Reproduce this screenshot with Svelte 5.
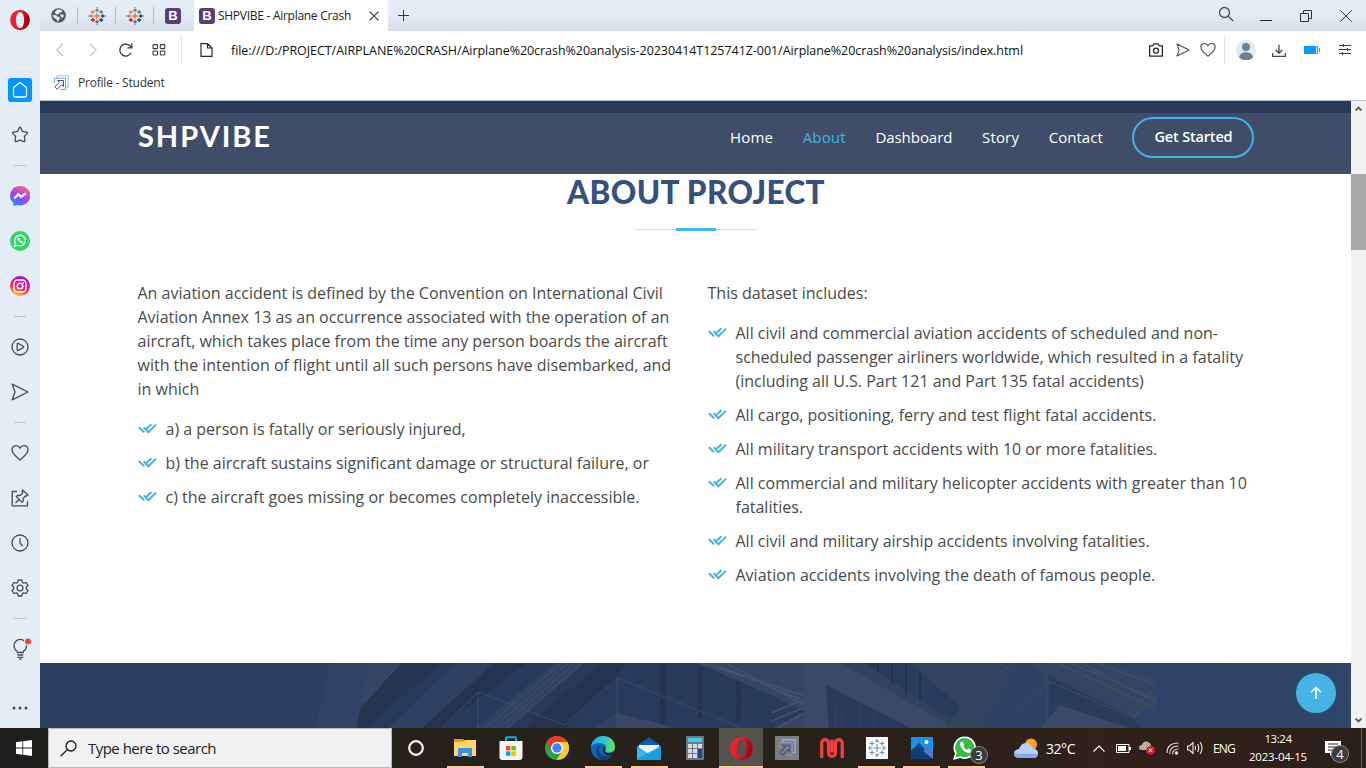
<script>
  // Spreads the letters of a label so that it fills the given width.
  function fit(node, width) {
    const natural = node.getBoundingClientRect().width;
    node.style.letterSpacing = (width - natural) / node.textContent.length + 'px';
  }

  const navLinks = [
    { label: 'Home', w: 43 },
    { label: 'About', w: 43, active: true },
    { label: 'Dashboard', w: 77 },
    { label: 'Story', w: 37 },
    { label: 'Contact', w: 54 }
  ];
  const intro = [
    'An aviation accident is defined by the Convention on International Civil',
    'Aviation Annex 13 as an occurrence associated with the operation of an',
    'aircraft, which takes place from the time any person boards the aircraft',
    'with the intention of flight until all such persons have disembarked, and',
    'in which'
  ];
  const leftList = [
    ['a) a person is fatally or seriously injured,'],
    ['b) the aircraft sustains significant damage or structural failure, or'],
    ['c) the aircraft goes missing or becomes completely inaccessible.']
  ];
  const rightList = [
    [
      'All civil and commercial aviation accidents of scheduled and non-',
      'scheduled passenger airliners worldwide, which resulted in a fatality',
      '(including all U.S. Part 121 and Part 135 fatal accidents)'
    ],
    ['All cargo, positioning, ferry and test flight fatal accidents.'],
    ['All military transport accidents with 10 or more fatalities.'],
    ['All commercial and military helicopter accidents with greater than 10', 'fatalities.'],
    ['All civil and military airship accidents involving fatalities.'],
    ['Aviation accidents involving the death of famous people.']
  ];
  const stars = [
    [10, 10, 3.4, '#e8762c'], [10, 3.6, 2, '#5b879b'], [10, 16.4, 2, '#5b6591'],
    [3.6, 10, 2, '#7199a6'], [16.4, 10, 2, '#1f457e'], [5.4, 5.6, 2.3, '#eb912c'],
    [14.6, 5.6, 2.3, '#59879b'], [5.4, 14.4, 2.3, '#c72035'], [14.6, 14.4, 2.3, '#1f457e']
  ];
</script>

{#snippet opera(size, id)}
  <svg width={size} height={size} viewBox="0 0 20 20">
    <defs>
      <linearGradient id={id} x1="0" x2="1" y1="0" y2=".3"><stop offset="0" stop-color="#ff2438" /><stop offset=".55" stop-color="#ee1428" /><stop offset="1" stop-color="#a3000f" /></linearGradient>
    </defs>
    <path fill="url(#{id})" fill-rule="evenodd" d="M10 0C4.500 0 .2 4.400.2 10S4.500 20 10 20s9.800-4.400 9.800-10S15.500 0 10 0zm0 1.900c2.700 0 4.100 3.700 4.100 8.100s-1.400 8.100-4.100 8.100S5.900 14.400 5.900 10 7.300 1.900 10 1.900z" />
  </svg>
{/snippet}

{#snippet tableau()}
  <svg width="18" height="18" viewBox="0 0 20 20">
    {#each stars as [x, y, r, c]}
      <path d="M{x - r} {y}h{2 * r}M{x} {y - r}v{2 * r}" stroke={c} stroke-width="1.500" />
    {/each}
    <path d="M10 0v1.500M10 18.500V20M0 10h1.500M18.500 10H20" stroke="#8292b8" stroke-width="1.500" />
  </svg>
{/snippet}

{#snippet bootstrap()}
  <span class="bs">B</span>
{/snippet}

{#snippet link(size)}
  <svg width={size} height={size} viewBox="0 0 16 16" fill="none">
    <path d="M4 3V.8h11.200v11.400H13" stroke="#7ecbe4" />
    <path d="M1.500 8V3.200h11v11.300h-5" stroke="#8f96c8" />
    <path d="M4.500 5.500h6v6L8.700 9.700l-4.400 4.600-2.600-2.500 4.600-4.500z" stroke="#3d5590" />
  </svg>
{/snippet}

{#snippet heart(size)}
  <svg width={size} height={size} viewBox="0 0 18 18" class="ln"><path d="M9 16C5 12.600 1 9.500 1 5.800 1 3.300 2.800 1.700 5 1.700c1.700 0 3.200.9 4 2.500.8-1.600 2.300-2.500 4-2.500 2.200 0 4 1.600 4 4.100C17 9.500 13 12.600 9 16z" /></svg>
{/snippet}

{#snippet plane(size)}
  <svg width={size} height={size} viewBox="0 0 18 18" class="ln"><path d="M1.200 1.200 17 9 1.200 16.800 4 9z" /></svg>
{/snippet}

{#snippet checks(items)}
  <ul>
    {#each items as lines}
      <li>
        <svg class="check" width="20" height="24" viewBox="0 0 20 24"><path d="M.9 10.200 6.200 15.300M5.700 10.200l4.700 5L18 7.600M8.600 11.800 13.400 7.200" fill="none" stroke="#47b2e4" stroke-width="2" /></svg>
        <div>{#each lines as line}<p>{line}</p>{/each}</div>
      </li>
    {/each}
  </ul>
{/snippet}

<div class="screen">
  <div class="window">
    <aside>
      <div class="logo">{@render opera(20, 'og1')}</div>
      <div class="cell"><span class="home"><svg width="24" height="24" viewBox="0 0 24 24" fill="none" stroke="#fff" stroke-width="1.300"><path d="M5.500 10.200Q5.500 9.600 6 9.200L11.300 4.900q.7-.5 1.400 0L18 9.200q.5.400.5 1v7q0 1.800-1.800 1.800H7.300q-1.800 0-1.800-1.800z" /></svg></span></div>
      <div class="cell"><svg width="18" height="18" viewBox="0 0 18 18" class="ln"><path d="M9 1.200q.5 0 .8.700l1.600 3.400 4.300.8q1.200.3.400 1.300l-2.700 3 .5 4.500q0 1-1 .7L9 14.200l-3.900 1.400q-1 .3-1-.7l.5-4.500-2.700-3q-.8-1 .4-1.300l4.300-.8 1.600-3.400q.3-.7.8-.7z" /></svg></div>
      <div class="sep"><i></i></div>
      <div class="cell"><svg width="20" height="20" viewBox="0 0 20 20"><defs><linearGradient id="ms" x1=".2" x2=".7" y1="1" y2="0"><stop offset="0" stop-color="#1b8cff" /><stop offset=".5" stop-color="#a044f5" /><stop offset="1" stop-color="#ff6575" /></linearGradient></defs><path fill="url(#ms)" d="M10 0a10 9.700 0 1 1-2.500 19L3.500 20v-3A9.700 9.700 0 0 1 10 0z" /><path d="m4.300 12.500 3.900-4.200 3 2.600 4.500-3.400" fill="none" stroke="#fff" stroke-width="2.200" /></svg></div>
      <div class="cell"><svg width="20" height="20" viewBox="0 0 20 20"><circle cx="10" cy="10" r="10" fill="#32d467" /><path d="m4.700 15.200.8-2.900a5.300 5.300 0 1 1 2 1.900z" fill="none" stroke="#fff" stroke-width="1.300" /><path d="M7.700 7.200c-.4 2 2.400 5 4.700 4.800l.7-1.300-1.600-.9-.8.700-1.400-1.500.5-.8-.7-1.600z" fill="#fff" /></svg></div>
      <div class="cell"><svg width="20" height="20" viewBox="0 0 20 20"><defs><linearGradient id="ig" x1=".3" x2=".7" y1="1" y2="0"><stop offset="0" stop-color="#ffd225" /><stop offset=".35" stop-color="#ff304f" /><stop offset=".7" stop-color="#e601b4" /><stop offset="1" stop-color="#6420f5" /></linearGradient></defs><circle cx="10" cy="10" r="10" fill="url(#ig)" /><g fill="none" stroke="#fff" stroke-width="1.500"><rect x="4" y="4" width="12" height="12" rx="3.500" /><circle cx="10" cy="10" r="2.800" /></g><circle cx="13.300" cy="6.700" r=".9" fill="#fff" /></svg></div>
      <div class="sep"><i></i></div>
      <div class="cell"><svg width="18" height="18" viewBox="0 0 18 18" class="ln"><circle cx="9" cy="9" r="8" /><path d="M6.200 6q0-1 1-.6l5 2.800q1 .7 0 1.400l-5 2.800q-1 .4-1-.6z" /></svg></div>
      <div class="cell">{@render plane(18)}</div>
      <div class="sep"><i></i></div>
      <div class="cell">{@render heart(18)}</div>
      <div class="cell"><svg width="18" height="18" viewBox="0 0 18 18" class="ln"><path d="M6 2.500H1.200v14.300h15.300v-4.500" /><path d="m11.500 1 5.500 5-1.500 1-1-.2-2.500 2.800.3 2.400-1.300 1.300-5.700-5.700 1.400-1.300 2.400.2 2.600-2.500-.5-1.300zM8 10.500 4.500 14" /></svg></div>
      <div class="cell"><svg width="18" height="18" viewBox="0 0 18 18" class="ln"><circle cx="9" cy="9" r="8" /><path d="M9 4.300V9l2.800 3" /></svg></div>
      <div class="cell"><svg width="18" height="18" viewBox="0 0 18 18" class="ln"><path d="M7.200 1h3.600l.6 2.400 1.400.8 2.400-.7L17 6.600l-1.700 1.700v1.400l1.700 1.700-1.800 3.100-2.400-.7-1.400.8-.6 2.400H7.200l-.6-2.400-1.400-.8-2.400.7L1 11.400l1.700-1.700V8.300L1 6.600l1.800-3.100 2.400.7 1.400-.8z" /><circle cx="9" cy="9" r="2.900" /></svg></div>
      <div class="sep"><i></i></div>
      <div class="cell bulb"><svg width="22" height="22" viewBox="0 0 22 22" class="ln"><path d="M7.300 14.500v-1.300Q4 11.300 4 7.700a6.300 6.300 0 0 1 12.600 0q0 3.600-3.300 5.500v1.300zM7.300 17h6M7.300 19.300h6M9 21.200h2.600" /><circle cx="18" cy="3.500" r="4" fill="#e4edf5" stroke="none" /><circle cx="18" cy="3.500" r="3" fill="#ff3b30" stroke="none" /></svg></div>
      <div class="dots"><svg width="16" height="4" viewBox="0 0 16 4" fill="#3f4852"><circle cx="2" cy="2" r="1.500" /><circle cx="8" cy="2" r="1.500" /><circle cx="14" cy="2" r="1.500" /></svg></div>
    </aside>

    <div class="main">
      <div class="tabs">
        <div class="mini first"><svg width="15" height="15" viewBox="0 0 15 15"><circle cx="7.500" cy="7.500" r="7.300" fill="#525960" /><path d="M6.500 1.600 11 2l-.3 2.200-2 .4-1.300 1.700H5L3.600 4.200zM1 7.200h4.300l1 1.600h2.200l.4 2-2.400 3-1-2.600-2.500-1.400zM9 6.500h3l1 1.400-1.800 2.100-1.500-1.700z" fill="#e8edf1" /></svg></div>
        <div class="mini">{@render tableau()}</div>
        <div class="mini">{@render tableau()}</div>
        <div class="mini last">{@render bootstrap()}</div>
        <div class="tab">
          {@render bootstrap()}
          <span class="tabname"><span use:fit={133}>SHPVIBE - Airplane Crash</span></span>
          <svg width="10" height="10" viewBox="0 0 10 10" class="ln thin"><path d="m.5.500 9 9m0-9-9 9" /></svg>
        </div>
        <svg class="plus" width="11" height="11" viewBox="0 0 11 11" fill="none" stroke="#333a40"><path d="M5.500 0v11M0 5.500h11" /></svg>
        <div class="wins">
          <svg width="16" height="16" viewBox="0 0 16 16" class="ln"><circle cx="6.500" cy="6.500" r="5" /><path d="m10.200 10.200 5 4.800" /></svg>
          <svg width="12" height="12" viewBox="0 0 12 12" fill="none" stroke="#222"><path d="M0 11.500h12" /></svg>
          <svg width="12" height="12" viewBox="0 0 12 12" fill="none" stroke="#333"><path d="M.5 3.500h8v8h-8zM3.500 3.500v-3h8v8h-3" /></svg>
          <svg width="12" height="12" viewBox="0 0 12 12" fill="none" stroke="#333"><path d="m.3.300 11.400 11.400m0-11.400L.3 11.700" /></svg>
        </div>
      </div>

      <div class="address">
        <div class="navs">
          <svg width="8" height="14" viewBox="0 0 8 14" fill="none" stroke="#c3c6c9" stroke-width="1.400"><path d="M7 .8.9 7 7 13.200" /></svg>
          <svg width="8" height="14" viewBox="0 0 8 14" fill="none" stroke="#c3c6c9" stroke-width="1.400"><path d="M1 .8 7.100 7 1 13.200" /></svg>
          <svg width="14" height="14" viewBox="0 0 14 14" fill="none" stroke="#333d45" stroke-width="1.300"><path d="M12.200 9.700A6 6 0 1 1 11.700 3.500l.8 1.300M12.800.5v4.300H8.500" /></svg>
          <svg width="14" height="12" viewBox="0 0 14 12" fill="none" stroke="#333d45" stroke-width="1.100"><rect x="1" y=".6" width="4.500" height="4" rx=".8" /><rect x="8.300" y=".6" width="4.500" height="4" rx=".8" /><rect x="1" y="7" width="4.500" height="4" rx=".8" /><rect x="8.300" y="7" width="4.500" height="4" rx=".8" /></svg>
        </div>
        <svg class="page" width="13" height="14" viewBox="0 0 13 14" fill="none" stroke="#222a30" stroke-width="1.200"><path d="M1 .7h6.500L12 5v8.300H1zM7.500.7V5H12" /></svg>
        <span class="url"><span use:fit={792}>file:///D:/PROJECT/AIRPLANE%20CRASH/Airplane%20crash%20analysis-20230414T125741Z-001/Airplane%20crash%20analysis/index.html</span></span>
        <div class="tools">
          <svg width="14" height="14" viewBox="0 0 14 14" class="ln dark"><path d="M.6 2.800h3.200L4.800.8h4.400l1 2h3.200v10.400H.6z" /><circle cx="7" cy="7.700" r="2.500" /></svg>
          {@render plane(14)}
          {@render heart(16)}
          <i></i>
          <svg class="av" width="20" height="20" viewBox="0 0 20 20"><circle cx="10" cy="10" r="10" fill="#e1eaf2" /><circle cx="10" cy="7" r="4" fill="#6b7f95" /><path d="M3 17.500q1-5.300 7-5.300t7 5.300A10 10 0 0 1 3 17.500z" fill="#6b7f95" /></svg>
          <svg class="dl ln" width="14" height="13" viewBox="0 0 14 13"><path d="M7 .5v8.700M3.700 6 7 9.300 10.300 6M.7 9v3.400h12.600V9" /></svg>
          <svg width="16" height="8" viewBox="0 0 16 8"><path fill="#0a96ff" d="M1 0h12q1 0 1 1v6q0 1-1 1H1Q0 8 0 7V1q0-1 1-1z" /><path d="M12.500 1v6" stroke="#fff" /><path d="M15.500 2v4" stroke="#0a96ff" /></svg>
          <svg width="12" height="12" viewBox="0 0 12 12" fill="none" stroke="#333d45"><path d="M0 1.500h12M0 5.500h12M0 9.500h12M4.500 0v3M8.500 4v3M3.500 8v3" /></svg>
        </div>
      </div>

      <div class="bookmarks">{@render link(16)}<span><span use:fit={86.5}>Profile - Student</span></span></div>

      <div class="viewport">
        <div class="site">
          <div class="hero"></div>
          <header>
            <h1><span use:fit={134}>SHPVIBE</span></h1>
            <nav>
              {#each navLinks as l}
                <a class:active={l.active} style="width:{l.w}px"><span use:fit={l.w}>{l.label}</span></a>
              {/each}
              <a class="cta"><span use:fit={78}>Get Started</span></a>
            </nav>
          </header>
          <section>
            <h2><span use:fit={258}>ABOUT PROJECT</span></h2>
            <div class="rule"><b></b></div>
            <div class="cols">
              <div class="left">
                <div class="para">{#each intro as line}<p>{line}</p>{/each}</div>
                {@render checks(leftList)}
              </div>
              <div>
                <div class="para"><p>This dataset includes:</p></div>
                {@render checks(rightList)}
              </div>
            </div>
          </section>
          <div class="banner">
            <svg width="1311" height="65" viewBox="0 0 1311 65">
              <defs>
                <linearGradient id="bg"><stop offset="0" stop-color="#2b3f63" /><stop offset=".5" stop-color="#2a3f62" /><stop offset="1" stop-color="#2f4669" /></linearGradient>
                <pattern id="slats" width="40" height="6" patternUnits="userSpaceOnUse" patternTransform="rotate(22)"><path d="M0 2h40" stroke="#233552" stroke-width="2.200" /></pattern>
              </defs>
              <rect width="1311" height="65" fill="url(#bg)" />
              <path d="M290 0h39l-8 43-5 22h-41z" fill="#2e4365" />
              <path d="M329 0h33l-41 43z" fill="#324566" />
              <path d="M362 0h52l-75 65h-23l5-22z" fill="#25354f" />
              <path d="M402 0h42l-70 65h-48z" fill="#263a5b" />
              <path d="M430 0h66l-76 65h-45z" fill="#24334f" />
              <path d="M416 0h38l-72 65h-34z" fill="#2e4163" />
              <path d="M486 0h33l-74 65h-45z" fill="#263a5b" />
              <path d="M515 0h30l-75 65h-35z" fill="#2f4262" />
              <path d="M545 0h36l-75 65h-36z" fill="#27385a" />
              <path d="M561 0h100l-83 65h-92z" fill="#24334f" />
              <path d="M577 15v50h-52z" fill="#273b5d" />
              <path d="M586 0h72l162 65H577V15z" fill="#283b5c" />
              <path d="M592 0h70l70 32v33l-100-18-40-28z" fill="url(#slats)" opacity=".4" />
              <path d="M620 0h5v65h-5zM658 5h4v50h-4zM696 18h5v40h-5z" fill="#24334f" />
              <path d="M577 50 636 65h-59z" fill="#384866" />
              <path d="M577 50 577 65h-22z" fill="#304263" />
              <path d="M438 29 525 62 577 15 702 65M438 29l-36 36M438 29v36M577 15v50" fill="none" stroke="#41526f" stroke-width=".8" />
              <path d="M345 0 322 26M350 0l-28 31M355 0l-33 37M360 0l-38 42M521 0l-75 65M528 0l-75 65M535 0l-75 65M542 0l-75 65" stroke="#3c4c69" stroke-width="1.100" />
              <path d="M656 0h110v65h-34l32-16-32-17z" fill="#364765" />
              <path d="M662 0 765 33M672 0l93 38M686 0l79 42M732 58l33-14M732 50l27-12M738 65l26-15" stroke="#43526e" stroke-width="1.500" fill="none" />
              <path d="M764 0h45l130 65h-69L786 22l5 43h-27z" fill="#3a4967" />
              <path d="M786 22 870 65h-81z" fill="#29395a" />
              <path d="M795 42v23M802 45v20M820 40v25M834 50v15" stroke="#304769" />
              <path d="M800 0h75l80 65h-40z" fill="#31425f" />
              <path d="M824 0h45l55 45v20z" fill="#283c5e" />
              <path d="M838 0v10M852 0v20M866 0v32M880 9v30" stroke="#22324f" stroke-width="2" />
              <path d="M875 0h105l-22 40-18 25h-35l15-20z" fill="#33445f" opacity=".8" />
              <path d="M990 0h75l48 14 5 26-24 14L1008 18z" fill="#344562" />
              <path d="M1010 0h32l75 40M1018 0l97 45M1030 0l86 36M1056 0l59 22" stroke="#42516d" stroke-width="1.100" fill="none" />
              <path d="M1008 12v53h95l-12-12z" fill="#293c5c" />
              <path d="M1010 16 1090 50l10 15h-60z" fill="url(#slats)" opacity=".4" />
              <path d="M1008 18 965 65M1008 18l85 37M1008 18v47" fill="none" stroke="#41526f" stroke-width=".8" />
              <path d="m1020 42 70 23h-90z" fill="#394966" />
              <path d="M956 15l15-15M946 10l12-10M1094 54l24-22M1088 50l24-22" stroke="#42516d" stroke-width="1" />
            </svg>
          </div>
          <div class="totop"><svg width="12" height="14" viewBox="0 0 12 14" fill="none" stroke="#fff" stroke-width="1.600"><path d="M6 13V1.500M1.200 6.200 6 1.400l4.800 4.800" /></svg></div>
        </div>
        <div class="scroll">
          <svg width="7" height="5" viewBox="0 0 7 5"><path d="M.5 4.500 3.500 1.500l3 3" fill="none" stroke="#555" stroke-width="1.800" /></svg>
          <div class="thumb"></div>
          <svg width="7" height="5" viewBox="0 0 7 5"><path d="M.5.500 3.500 3.500l3-3" fill="none" stroke="#555" stroke-width="1.800" /></svg>
        </div>
      </div>
    </div>
  </div>

  <footer>
    <div class="start"><svg width="16" height="16" viewBox="0 0 16 16" fill="#fff"><path d="M0 2.200 6.400 1.300v6.300H0zM7.200 1.200 16 0v7.600H7.200zM0 8.400h6.400v6.300L0 13.800zM7.200 8.400H16V16l-8.800-1.200z" /></svg></div>
    <div class="search"><svg width="17" height="17" viewBox="0 0 17 17" fill="none" stroke="#1a1a1a" stroke-width="1.300"><circle cx="11" cy="6" r="5" /><path d="M7.300 9.600.6 16.300" /></svg><span><span use:fit={128}>Type here to search</span></span></div>
    <div class="apps">
      <div class="app cortana"><svg width="16" height="16" viewBox="0 0 16 16" fill="none" stroke="#f4f4f4" stroke-width="2.200"><circle cx="8" cy="8" r="6.800" /></svg></div>
      <div class="app open"><svg width="22" height="20" viewBox="0 0 22 20"><path d="M0 1h9l2 2v4H0z" fill="#e0a010" /><path d="M0 4h9l2-2h11v16H0z" fill="#ffd66b" /><path d="M4 19v-8q0-1 1-1h12q1 0 1 1v8h-4v-4H8v4z" fill="#3c91dc" /></svg></div>
      <div class="app"><svg width="24" height="24" viewBox="0 0 24 24"><path d="M7 6V2q0-.8.800-.8h8.400q.8 0 .8.800v4" fill="none" stroke="#16a9ea" stroke-width="2" /><path d="M.5 5h23v16q0 3-3 3h-17q-3 0-3-3z" fill="#f5f5f5" /><path fill="#f25022" d="M7 10h4.400v4.400H7z" /><path fill="#7fba00" d="M12.400 10h4.400v4.400h-4.400z" /><path fill="#00a4ef" d="M7 15.400h4.400v4.400H7z" /><path fill="#ffb900" d="M12.400 15.400h4.400v4.400h-4.400z" /></svg></div>
      <div class="app"><svg width="24" height="24" viewBox="0 0 24 24"><circle cx="12" cy="12" r="12" fill="#2ca14b" /><path d="M12 12 1.600 6A12 12 0 0 1 22.400 6z" fill="#e33b2e" /><path d="M12 6h10.400A12 12 0 0 1 11.500 24l5.700-9z" fill="#fcc934" /><path d="M1.600 6 7 15l5-9z" fill="#e33b2e" /><circle cx="12" cy="12" r="6" fill="#fff" /><circle cx="12" cy="12" r="4.700" fill="#4285f4" /></svg></div>
      <div class="app open"><svg width="24" height="24" viewBox="0 0 24 24"><defs><linearGradient id="ed"><stop offset="0" stop-color="#21a5e8" /><stop offset=".55" stop-color="#30c5cf" /><stop offset="1" stop-color="#6be54b" /></linearGradient></defs><circle cx="12" cy="12" r="12" fill="#0c66b7" /><path d="M0 11C1 4 6 0 12 0c7 0 12 5 12 10.500 0 4-3 6-6.500 6-3 0-4-1-3-2.500 2-4-1.500-7-5.500-7-4 0-8 2-9 4z" fill="url(#ed)" /><path d="M10 9c-5 6 0 12 7 11 2 0 4-1 5-2-2 4-6 6-10 6C4 23 3 11 10 9z" fill="#123f83" /><path d="M14.500 14c-1 2 1 3.500 4 3.300l5.500-1.500-1.500 3c-7 3-13-3-9.500-8q2 1 1.500 3.200z" fill="#25231d" /></svg></div>
      <div class="app open"><svg width="24" height="23" viewBox="0 0 24 23"><path d="M0 9 12 0l12 9v4H0z" fill="#075eac" /><path d="M2 8h20v10H2z" fill="#f1f4f7" /><path d="m0 9 12 8 12-8v14H0z" fill="#32b6f2" /><path d="m12 15 12-6v14H0z" fill="#1691dc" opacity=".7" /></svg></div>
      <div class="app"><svg width="18" height="24" viewBox="0 0 18 24"><rect width="18" height="24" rx="1" fill="#6d7883" /><path d="M2 2h14v4H2z" fill="#42cdf5" /><path d="M2 8h4v4H2zM7 8h4v4H7zM12 8h4v4h-4zM2 13h4v4H2zM7 13h4v4H7zM2 18h4v4H2zM7 18h4v4H7z" fill="#d9dde2" /><path d="M12 13h4v9h-4z" fill="#164a8a" /></svg></div>
      <div class="app open current">{@render opera(23, 'og2')}</div>
      <div class="app n"><span class="tile">{@render link(18)}</span></div>
      <div class="app n"><svg width="24" height="20" viewBox="0 0 24 20" fill="none" stroke="#f1403f" stroke-width="3.300"><path d="M1.700 20V5.100a3.430 3.430 0 0 1 6.860 0V14.900a3.430 3.430 0 0 0 6.860 0V5.100a3.430 3.430 0 0 1 6.860 0V20M12 1.500v13" /></svg></div>
      <div class="app n open"><svg width="22" height="22" viewBox="0 0 22 22"><path d="M0 0h22v22H0z" fill="#fafafa" /><path d="M11 7v8M7 11h8M11 2v4M9 4h4M11 16v4M9 18h4M2 11h4M4 9v4M16 11h4M18 9v4M6 4v5M3.500 6.500h5M16 4v5M13.500 6.500h5M6 13v5M3.500 15.500h5M16 13v5M13.500 15.500h5" stroke="#6f95b3" stroke-width="1.100" /></svg></div>
      <div class="app n open"><svg width="22" height="22" viewBox="0 0 22 22"><path d="M0 0h22v22H0z" fill="#1b91e9" /><path d="M0 14 8 6l14 15v1H0z" fill="#103e72" /><path d="m12 14 5-4 5 5v7z" fill="#5873d0" /><circle cx="15.500" cy="5" r="2" fill="#fff" /></svg></div>
      <div class="app n open wa"><svg width="30" height="28" viewBox="0 0 30 28"><path d="M0 24 2 17.500A11.300 11.300 0 1 1 7 22z" fill="#fff" /><path d="m2.300 21.600 1.500-4.700a9.500 9.500 0 1 1 3.900 3.300z" fill="#36bb4b" /><path d="M7.200 6.400c-1 5 5 11.300 9.800 10.400l1.400-2.600-3-1.800-1.600 1.500-3.500-3.600 1-1.600-1.500-3z" fill="#fff" /></svg><em>3</em></div>
    </div>
    <div class="tray">
      <svg width="25" height="20" viewBox="0 0 25 20"><circle cx="17" cy="6.500" r="6" fill="#f7a128" /><path d="M5 20q-5-.5-5-4.500t5-4.500Q7 5 12 5t7 5.500q5 .5 5 5T19 20z" fill="#b7cff5" /><path d="M5 20q-5-.5-5-4.500l24 .5q-1 4-5 4z" fill="#85a9e8" /></svg>
      <span class="temp"><span use:fit={29}>32°C</span></span>
      <svg width="12" height="7" viewBox="0 0 12 7" fill="none" stroke="#fff" stroke-width="1.200"><path d="M.5 6.500 6 1l5.500 5.500" /></svg>
      <svg width="15" height="9" viewBox="0 0 15 9"><path d="M.5.500h12.500v8H.5z" fill="none" stroke="#fff" /><path d="M2 2h8v5H2zM13 3h2v3h-2z" fill="#fff" /></svg>
      <svg width="16" height="14" viewBox="0 0 16 14"><path d="M3 9Q0 9 0 6.500T3 4q1-4 5-3.500Q11 1 12 4l-3 5z" fill="#b3b0ad" /><circle cx="11.500" cy="9.300" r="4.400" fill="#d9202a" /><path d="m9.800 7.600 3.400 3.400m0-3.400L9.800 11" stroke="#fff" /></svg>
      <svg width="13" height="13" viewBox="0 0 13 13" fill="none" stroke="#ddd" stroke-width="1.100"><path d="M1 11Q1 1 12.500 1M3.700 12Q3.700 4 12.500 4M6.500 12.500Q6.500 7 12.500 7" /><circle cx="10.500" cy="11" r="1.200" fill="#fff" /></svg>
      <svg width="17" height="14" viewBox="0 0 17 14" fill="none" stroke="#eee" stroke-width="1.100"><path d="M.6 5h2L6 1.500v11L2.600 9h-2zM8 5q1 2 0 4M10.500 3q2.500 4 0 8M13 1q4 6 0 12" /></svg>
      <span class="lang"><span use:fit={22}>ENG</span></span>
      <div class="clock"><span><span use:fit={27}>13:24</span></span><span><span use:fit={58}>2023-04-15</span></span></div>
      <div class="note"><svg width="17" height="15" viewBox="0 0 17 15"><path d="M0 0h16v12H8l-3 3v-3H0z" fill="#fff" /><path d="M3 3h10M3 6h10M3 9h6" stroke="#2a2019" /></svg><em>4</em></div>
      <div class="peek"></div>
    </div>
  </footer>
</div>

<style>
  :global(body) { margin: 0; overflow: hidden; }
  .screen { width: 1366px; height: 768px; display: flex; flex-direction: column; font-family: 'Open Sans', 'Noto Sans', sans-serif; color: #4a4a4a; }
  .screen *, .screen { box-sizing: border-box; }
  svg { display: block; flex: none; }
  p, h1, h2, ul { margin: 0; padding: 0; }
  span > span { display: inline-block; white-space: nowrap; }
  h1 > span, h2 > span, a > span { display: inline-block; white-space: nowrap; }
  .ln { fill: none; stroke: #434c57; stroke-width: 1.3; stroke-linejoin: round; }
  .ln.thin { stroke-width: 1.1; }
  .ln.dark { stroke: #222a30; }
  .window { height: 728px; display: flex; }
  aside { width: 40px; background: #e4edf5; display: flex; flex-direction: column; }
  .logo { height: 67px; padding: 10px 0 0 10px; }
  .cell { height: 45px; display: flex; align-items: center; justify-content: center; }
  .home { width: 24px; height: 24px; border-radius: 3px; background: #0396ff; }
  .sep { height: 16px; display: flex; align-items: center; justify-content: center; }
  .sep i { width: 12px; height: 1px; background: #b0c5d4; }
  .bulb { padding-left: 1px; }
  .dots { display: flex; justify-content: center; padding-top: 35px; }

  .main { flex: 1; display: flex; flex-direction: column; }
  .tabs { height: 31px; display: flex; align-items: center; background: linear-gradient(#e4edf5 40%, #d6dfe8); }
  .mini { width: 38px; height: 17px; display: flex; align-items: center; justify-content: center; border-right: 1px solid #b4bcc4; }
  .mini.last { border: 0; width: 40px; padding-right: 2px; }
  .bs { width: 16px; height: 16px; border-radius: 3px; background: #563d7c; color: #fff; font: bold 13px/16px 'Liberation Sans', sans-serif; text-align: center; flex: none; }
  .tab { height: 31px; width: 194px; background: #fff; display: flex; align-items: center; padding-left: 5px; }
  .tabname { width: 151px; margin: 0 0 0 3px; font-size: 12px; color: #222; }
  .plus { margin-left: 10px; }
  .wins { margin-left: auto; display: flex; align-items: center; padding-right: 14px; gap: 28px; }
  .wins svg:first-child { margin-right: -2px; margin-top: -3px; }
  .wins svg:nth-child(2) { transform: translateY(-1px); }
  .address { height: 38px; background: #fff; display: flex; align-items: center; }
  .navs { width: 142px; height: 28px; border-right: 1px solid #dfe3e6; display: flex; align-items: center; padding-left: 16px; gap: 25px; }
  .navs svg:nth-child(3) { margin-left: -3px; }
  .navs svg:nth-child(4) { margin-left: -6px; }
  .page { margin-left: 18px; }
  .url { margin-left: 18px; font-size: 12.5px; color: #111; width: 800px; }
  .tools { margin-left: auto; display: flex; align-items: center; padding-right: 15px; }
  .tools > * { margin-left: 13px; }
  .tools > :nth-child(3) { margin-left: 10px; }
  .tools i { height: 29px; width: 1px; background: #dfe3e6; margin-left: 8px; }
  .tools .av { margin-left: 11px; }
  .tools .dl { margin-left: 16px; }
  .tools > :nth-child(7) { margin-left: 18px; }
  .tools > :nth-child(8) { margin-left: 19px; }
  .bookmarks { height: 32px; background: #fff; border-bottom: 1px solid #b3c2cf; display: flex; align-items: center; padding: 0 0 4px 13px; font-size: 12px; color: #333; gap: 9px; }

  .viewport { height: 627px; display: flex; }
  .site { width: 1311px; background: #fff; position: relative; }
  .hero { height: 12px; background: #283a5a; }
  header { height: 61px; background: #3f4d69; display: flex; align-items: flex-start; padding: 4px 0 0 98px; }
  h1 { color: #fff; font: bold 29px/36px Lato, sans-serif; width: 592px; padding-top: 1px; }
  nav { display: flex; align-items: center; gap: 29.7px; }
  a { font-size: 15px; font-weight: 500; color: #fff; line-height: 20px; padding-bottom: 1px; }
  a.active { color: #47b2e4; }
  a.cta { width: 122px; height: 41px; border: 2px solid #47b2e4; border-radius: 21px; display: flex; align-items: center; justify-content: center; font-weight: 600; font-size: 14.5px; }
  section { height: 489px; }
  h2 { text-align: center; color: #37517e; font: 900 31.5px/36px Lato, sans-serif; padding-left: 1px; }
  .rule { width: 120px; height: 1px; background: #ddd; margin: 19px auto 0; display: flex; justify-content: center; align-items: center; }
  .rule b { width: 40px; height: 3px; background: #47b2e4; flex: none; }
  .cols { display: grid; grid-template-columns: 570px 570px; padding: 51px 0 0 97.5px; font-size: 16px; line-height: 24px; }
  p { white-space: nowrap; }
  .para { margin-bottom: 16px; }
  li { display: flex; gap: 8px; padding-bottom: 10px; list-style: none; }
  .banner { height: 65px; }
  .totop { position: absolute; right: 15px; bottom: 15px; width: 40px; height: 40px; border-radius: 50%; background: #47b2e4; display: flex; align-items: center; justify-content: center; }
  .scroll { width: 15px; background: #f1f1f1; display: flex; flex-direction: column; align-items: center; padding: 5px 0; }
  .thumb { width: 15px; height: 76px; background: #a8a8a8; margin: 63px 0 auto; }

  footer { height: 40px; display: flex; background: linear-gradient(90deg, #1e1e1c, #26221a 35%, #26211a 55%, #30211a 80%, #2b2019); color: #fff; }
  .start { width: 48px; display: flex; align-items: center; justify-content: center; }
  .search { width: 344px; background: #f1f1f1; border: 1px solid #bbb; display: flex; align-items: center; padding-left: 11px; gap: 11px; font-size: 15px; color: #222; }
  .apps { display: flex; padding-left: 1px; }
  .app { width: 46px; height: 40px; display: flex; align-items: center; justify-content: center; background: linear-gradient(#ffc7a3, #ffc7a3) no-repeat center 38px / 0 2px; }
  .app.cortana { margin-right: 3px; }
  .app.n { width: 45px; }
  .app.open { background-size: 37px 2px; }
  .app.current { background: linear-gradient(#ffc7a3, #ffc7a3) no-repeat 0 38px / 46px 2px, #55514c; width: 44px; margin: 0 1px; }
  .tile { width: 24px; height: 24px; background: #7b7d81; display: flex; align-items: center; justify-content: center; }
  .app.wa { position: relative; padding: 4px 0 0 3px; }
  em { font: 13px/16px 'Open Sans', sans-serif; width: 16px; height: 16px; border-radius: 50%; background: #3c3c3c; box-shadow: 0 0 0 1px #8a8a8a; color: #fff; text-align: center; position: absolute; }
  .wa em { right: 2px; bottom: 5px; }
  .tray { margin-left: auto; display: flex; align-items: center; font-size: 12px; width: 352px; flex: none; }
  .temp { font-size: 14px; width: 29px; margin: 0 18px 0 7px; }
  .tray > svg:nth-child(4) { margin-left: 11px; }
  .tray > svg:nth-child(5) { margin-left: 8px; }
  .tray > svg:nth-child(6) { margin-left: 11px; }
  .tray > svg:nth-child(7) { margin-left: 8px; }
  .lang { margin-left: 9px; width: 22px; }
  .clock { width: 58px; margin-left: 14px; display: flex; flex-direction: column; align-items: center; line-height: 18px; font-size: 11.5px; }
  .note { margin-left: 18px; position: relative; }
  .note em { right: -6px; bottom: -6px; }
  .peek { width: 1px; height: 40px; background: #6b625c; margin: 0 4px 0 auto; }
</style>
